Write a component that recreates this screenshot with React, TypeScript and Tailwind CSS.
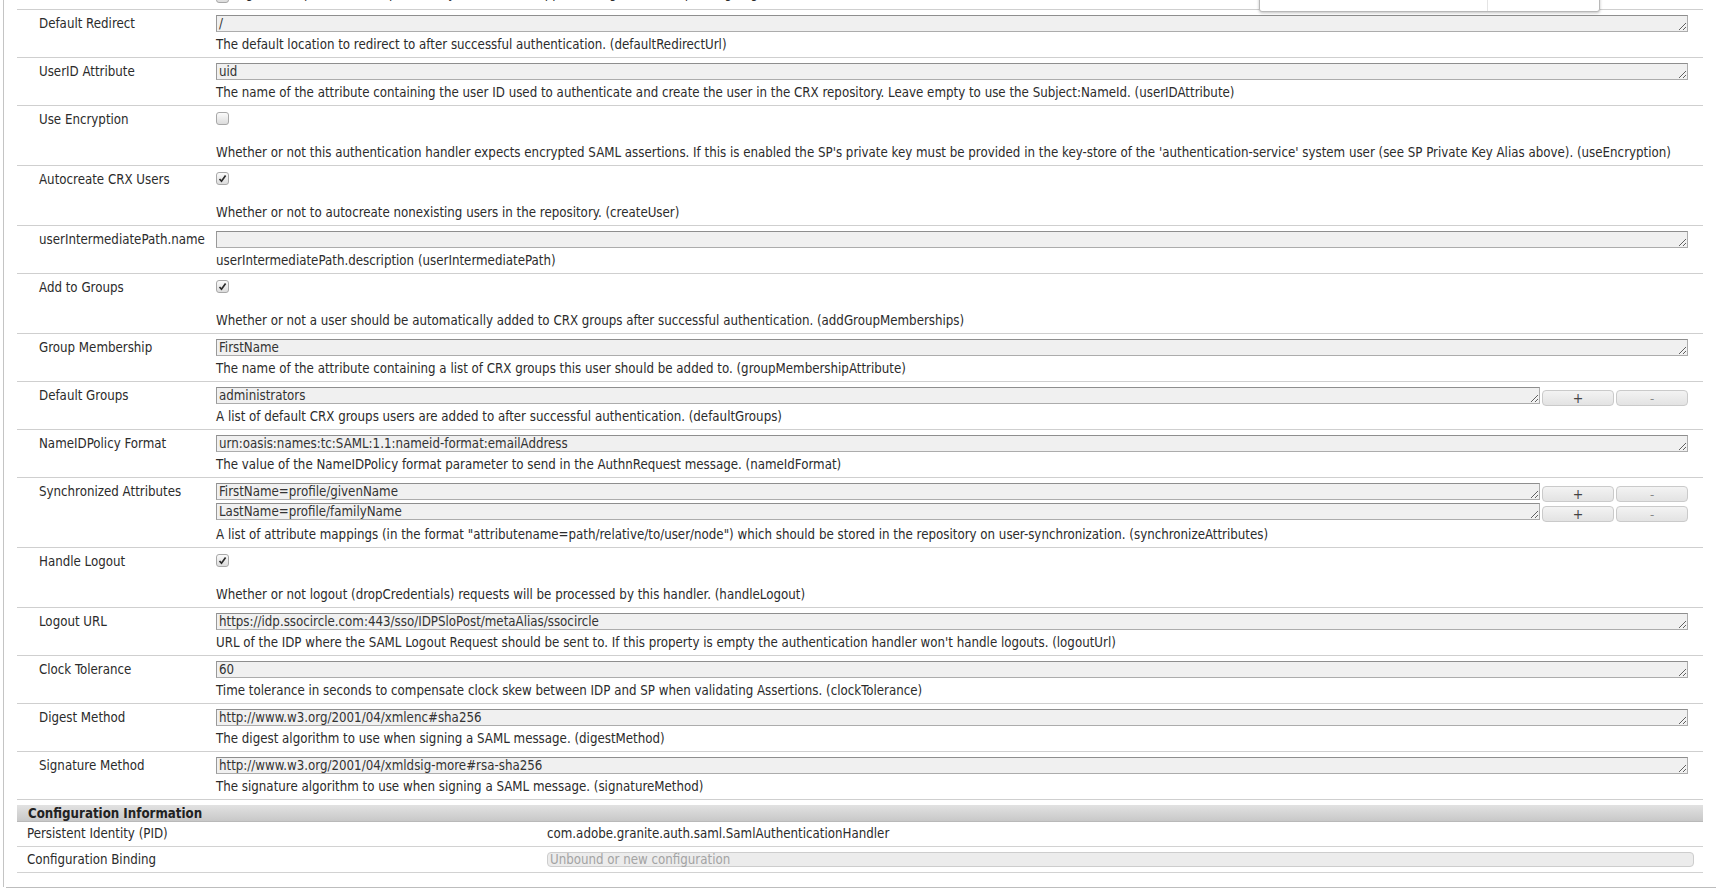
import React from "react";

type Field =
  | { kind: "text"; label: string; values: string[]; multi?: boolean; desc: string }
  | { kind: "check"; label: string; checked: boolean; desc: string };

const FIELDS: Field[] = [
  {
    kind: "text",
    label: "Default Redirect",
    values: ["/"],
    desc: "The default location to redirect to after successful authentication. (defaultRedirectUrl)",
  },
  {
    kind: "text",
    label: "UserID Attribute",
    values: ["uid"],
    desc: "The name of the attribute containing the user ID used to authenticate and create the user in the CRX repository. Leave empty to use the Subject:NameId. (userIDAttribute)",
  },
  {
    kind: "check",
    label: "Use Encryption",
    checked: false,
    desc: "Whether or not this authentication handler expects encrypted SAML assertions. If this is enabled the SP's private key must be provided in the key-store of the 'authentication-service' system user (see SP Private Key Alias above). (useEncryption)",
  },
  {
    kind: "check",
    label: "Autocreate CRX Users",
    checked: true,
    desc: "Whether or not to autocreate nonexisting users in the repository. (createUser)",
  },
  {
    kind: "text",
    label: "userIntermediatePath.name",
    values: [""],
    desc: "userIntermediatePath.description (userIntermediatePath)",
  },
  {
    kind: "check",
    label: "Add to Groups",
    checked: true,
    desc: "Whether or not a user should be automatically added to CRX groups after successful authentication. (addGroupMemberships)",
  },
  {
    kind: "text",
    label: "Group Membership",
    values: ["FirstName"],
    desc: "The name of the attribute containing a list of CRX groups this user should be added to. (groupMembershipAttribute)",
  },
  {
    kind: "text",
    label: "Default Groups",
    values: ["administrators"],
    multi: true,
    desc: "A list of default CRX groups users are added to after successful authentication. (defaultGroups)",
  },
  {
    kind: "text",
    label: "NameIDPolicy Format",
    values: ["urn:oasis:names:tc:SAML:1.1:nameid-format:emailAddress"],
    desc: "The value of the NameIDPolicy format parameter to send in the AuthnRequest message. (nameIdFormat)",
  },
  {
    kind: "text",
    label: "Synchronized Attributes",
    values: ["FirstName=profile/givenName", "LastName=profile/familyName"],
    multi: true,
    desc: 'A list of attribute mappings (in the format "attributename=path/relative/to/user/node") which should be stored in the repository on user-synchronization. (synchronizeAttributes)',
  },
  {
    kind: "check",
    label: "Handle Logout",
    checked: true,
    desc: "Whether or not logout (dropCredentials) requests will be processed by this handler. (handleLogout)",
  },
  {
    kind: "text",
    label: "Logout URL",
    values: ["https://idp.ssocircle.com:443/sso/IDPSloPost/metaAlias/ssocircle"],
    desc: "URL of the IDP where the SAML Logout Request should be sent to. If this property is empty the authentication handler won't handle logouts. (logoutUrl)",
  },
  {
    kind: "text",
    label: "Clock Tolerance",
    values: ["60"],
    desc: "Time tolerance in seconds to compensate clock skew between IDP and SP when validating Assertions. (clockTolerance)",
  },
  {
    kind: "text",
    label: "Digest Method",
    values: ["http://www.w3.org/2001/04/xmlenc#sha256"],
    desc: "The digest algorithm to use when signing a SAML message. (digestMethod)",
  },
  {
    kind: "text",
    label: "Signature Method",
    values: ["http://www.w3.org/2001/04/xmldsig-more#rsa-sha256"],
    desc: "The signature algorithm to use when signing a SAML message. (signatureMethod)",
  },
];

function Checkbox({ checked }: { checked: boolean }) {
  return (
    <div className="flex h-[13px] w-[13px] items-center justify-center rounded-[3px] border border-[#a8a8a8] bg-gradient-to-b from-[#fbfbfb] to-[#dcdcdc]">
      {checked && (
        <svg width="9" height="9" viewBox="0 0 9 9">
          <path d="M1.5 5 L3.5 7.2 L7.6 1.6" fill="none" stroke="#2a2a2a" strokeWidth="1.7" />
        </svg>
      )}
    </div>
  );
}

function Box({ value }: { value: string }) {
  return (
    <textarea
      readOnly
      rows={1}
      defaultValue={value}
      className="block h-[17px] w-full resize-y overflow-hidden border border-[#acacac] border-t-[#8e8e8e] border-l-[#999] bg-[#f0f0f0] px-[2px] py-0 text-[13.2px] leading-[15px] text-[#333] outline-none"
      style={{ fontFamily: "inherit" }}
    />
  );
}

function PlusMinus() {
  return (
    <div className="mt-[3px] flex shrink-0 gap-[2px] pl-[2px]">
      <button className="h-[16px] w-[72px] rounded-[4px] border border-[#cacaca] bg-gradient-to-b from-[#f3f3f3] to-[#e3e3e3] text-[14px] leading-[13px] text-[#444]">
        +
      </button>
      <button className="h-[16px] w-[72px] rounded-[4px] border border-[#cacaca] bg-gradient-to-b from-[#f3f3f3] to-[#e3e3e3] text-[13px] leading-[13px] text-[#888]">
        -
      </button>
    </div>
  );
}

function Row({ f }: { f: Field }) {
  const many = f.kind === "text" && f.multi && f.values.length > 1;
  return (
    <div className="flex border-b border-[#cfcfcf] pt-[5px] pb-[4px]">
      <div className="w-[199px] shrink-0 pl-[22px] leading-[17px]">{f.label}</div>
      <div className="min-w-0 flex-1 pr-[15px]">
        {f.kind === "check" ? (
          <div className="h-[29px] pt-[1px]">
            <Checkbox checked={f.checked} />
          </div>
        ) : f.multi ? (
          <div className={`flex flex-col gap-[1px] ${many ? "" : "mb-[-2px]"}`}>
            {f.values.map((v, i) => (
              <div key={i} className="flex h-[19px] items-start">
                <div className="flex-1">
                  <Box value={v} />
                </div>
                <PlusMinus />
              </div>
            ))}
          </div>
        ) : (
          <Box value={f.values[0]} />
        )}
        <div className="mt-[4px] whitespace-nowrap leading-[17px]">{f.desc}</div>
      </div>
    </div>
  );
}

export default function App() {
  return (
    <div
      className="relative h-[889px] w-full overflow-hidden bg-white text-[13.2px] text-[#2b2b2b]"
      style={{ fontFamily: '"DejaVu Sans Condensed", "DejaVu Sans", Tahoma, sans-serif' }}
    >
      <div className="ml-[3px] h-[887px] border-l border-[#c4c4c4] pl-[13px] pr-[13px]">
        {/* cut-off row above the fold */}
        <div className="h-[10px] overflow-hidden border-b border-[#cfcfcf]">
          <div className="-mt-[15px] flex items-start gap-[6px] pl-[199px] leading-[17px]">
            <div className="mt-[5px]">
              <Checkbox checked={false} />
            </div>
            <span className="whitespace-nowrap">
              Sign the request with the private key of the SP, if supported (signature) (requestSigning)
            </span>
          </div>
        </div>

        {FIELDS.map((f) => (
          <Row key={f.label} f={f} />
        ))}

        <div className="mt-[5px]">
          <div className="h-[17px] border-b border-[#b9b9b9] bg-gradient-to-b from-[#e2e2e2] to-[#c8c8c8] pl-[11px] font-bold leading-[17px] text-[#222]">
            Configuration Information
          </div>
          <div className="flex h-[25px] items-center border-b border-[#d2d2d2]">
            <div className="w-[530px] shrink-0 pl-[10px]">Persistent Identity (PID)</div>
            <div>com.adobe.granite.auth.saml.SamlAuthenticationHandler</div>
          </div>
          <div className="flex h-[26px] items-center border-b border-[#d2d2d2]">
            <div className="w-[530px] shrink-0 pl-[10px]">Configuration Binding</div>
            <div className="mr-[9px] h-[15px] flex-1 rounded-[4px] border border-[#cdcdcd] bg-[#ececec] pl-[2px] leading-[13px] text-[#a3a3a3]">
              Unbound or new configuration
            </div>
          </div>
        </div>
      </div>
      <div className="ml-[6px] border-t border-[#bdbdbd]" />

      {/* dropdown remnant overlapping the top edge */}
      <div className="absolute left-[1259px] top-[-4px] flex h-[16px] w-[341px] rounded-b-[3px] border border-[#b8b8b8] bg-white shadow-[0_1px_3px_rgba(0,0,0,0.25)]">
        <div className="w-[228px] border-r border-[#e4e4e4]" />
      </div>
    </div>
  );
}
